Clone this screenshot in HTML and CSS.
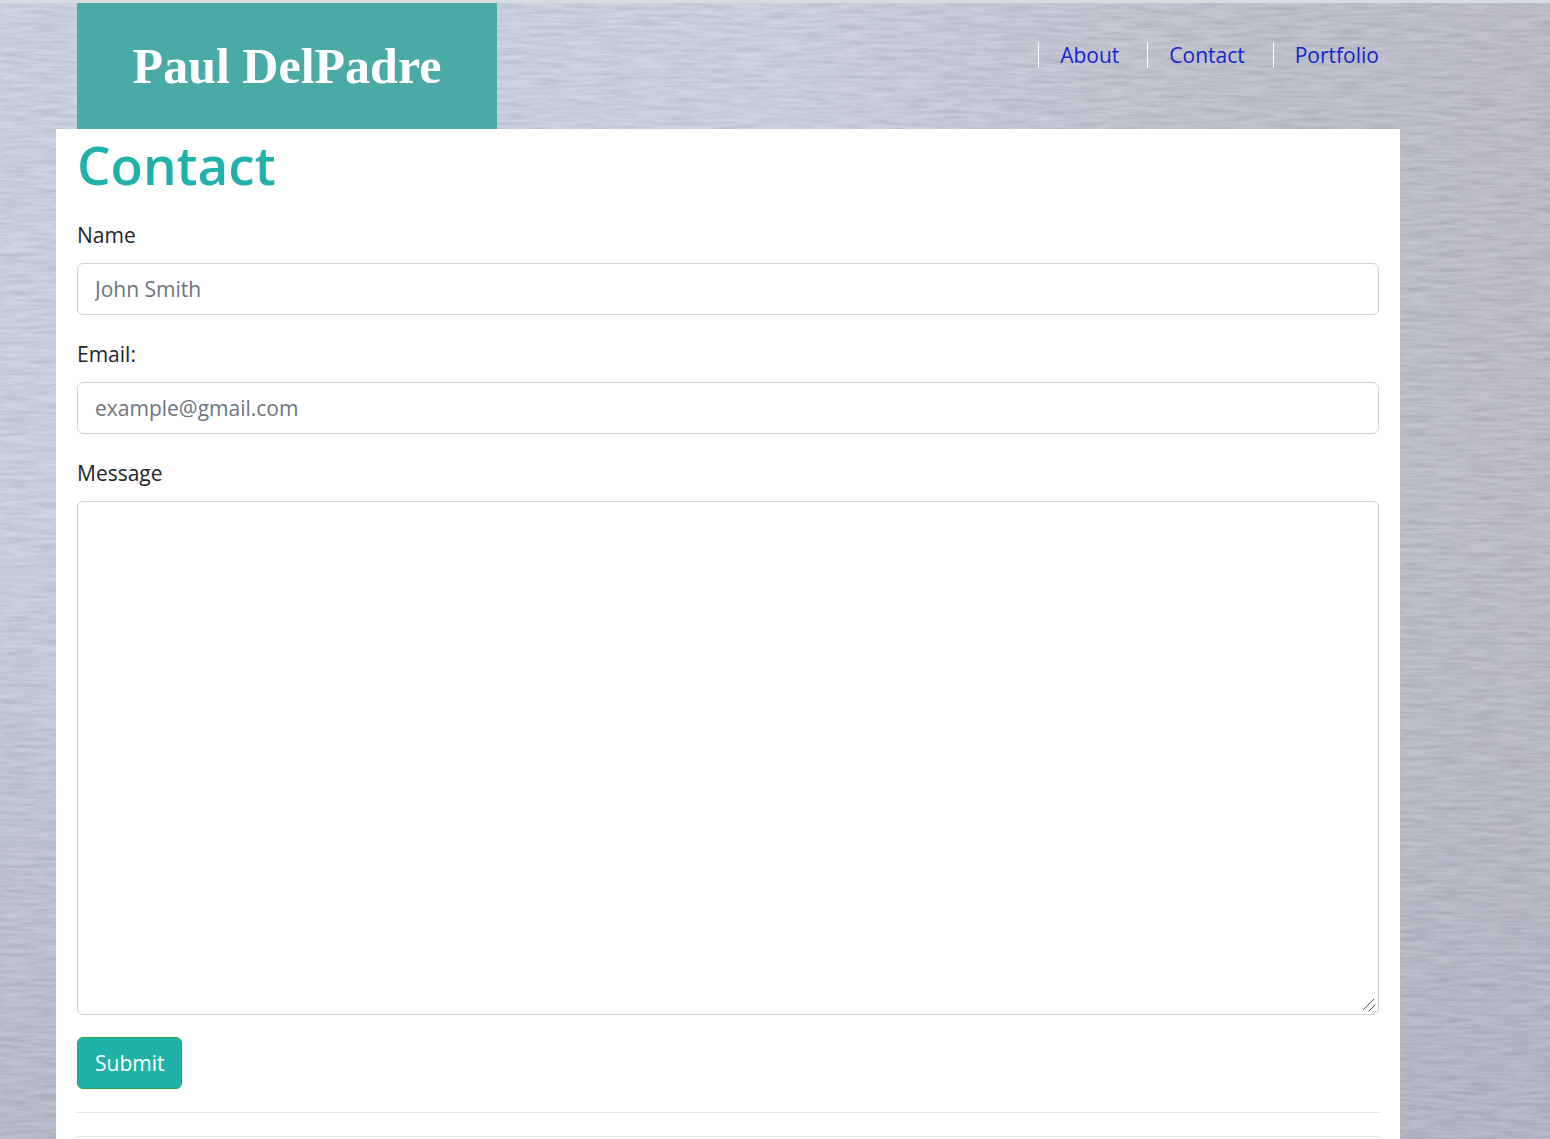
FILE: index.html
```html
<!DOCTYPE html>
<html lang="en">
<head>
  <meta charset="utf-8">
  <meta name="viewport" content="width=device-width, initial-scale=1">
  <title>Paul DelPadre - Contact</title>
  <link rel="stylesheet" href="styles.css">
</head>
<body>
  <svg class="texture" aria-hidden="true">
    <filter id="brushed" x="0" y="0" width="100%" height="100%" color-interpolation-filters="sRGB">
      <feTurbulence type="fractalNoise" baseFrequency="0.03 0.26" numOctaves="3" seed="7"/>
      <feColorMatrix values="1.6 0 0 0 -0.1  1.6 0 0 0 -0.1  1.6 0 0 0 -0.08  0 0 0 0 1"/>
    </filter>
    <rect width="100%" height="100%" filter="url(#brushed)"/>
  </svg>
  <div class="container">
    <header class="header">
      <a class="brand" href="#">Paul DelPadre</a>
      <nav class="nav">
        <a href="#">About</a>
        <a href="#">Contact</a>
        <a href="#">Portfolio</a>
      </nav>
    </header>
    <main class="content">
      <h1>Contact</h1>
      <form>
        <div class="group">
          <label for="name">Name</label>
          <input class="control" id="name" type="text" placeholder="John Smith">
        </div>
        <div class="group">
          <label for="email">Email:</label>
          <input class="control" id="email" type="email" placeholder="example@gmail.com">
        </div>
        <div class="group">
          <label for="message">Message</label>
          <textarea class="control message" id="message"></textarea>
        </div>
        <button class="submit" type="submit">Submit</button>
      </form>
      <hr>
      <hr>
    </main>
  </div>
</body>
</html>
```
FILE: styles.css
```css
* {
  box-sizing: border-box;
}

body {
  margin: 0;
  min-height: 100vh;
  border-top: 3px solid #d8dcde;
  background:
    linear-gradient(to bottom, rgba(176, 178, 194, 0) 45%, rgba(176, 178, 194, 0.8) 100%),
    linear-gradient(to right, #c8d0e1 0%, #cad0e0 50%, #bec0ca 80%, #babbc5 100%);
  color: #212529;
  font-family: "Segoe UI", "Open Sans", "Noto Sans", sans-serif;
  font-size: 21px;
  line-height: 34px;
}

.texture {
  position: absolute;
  top: 3px;
  left: 0;
  z-index: -1;
  width: 100%;
  height: calc(100% - 3px);
  opacity: 0.09;
}

.container {
  display: flex;
  flex-direction: column;
  max-width: 1344px;
  min-height: calc(100vh - 3px);
  margin-left: 56px;
}

.header {
  display: flex;
  justify-content: space-between;
  align-items: flex-start;
  padding: 0 21px;
}

.brand {
  width: 420px;
  padding: 32px 0;
  background: #4aaaa5;
  color: #fff;
  font-family: Georgia, "Liberation Serif", serif;
  font-size: 50px;
  font-weight: 700;
  line-height: 62px;
  text-align: center;
  text-decoration: none;
}

.nav {
  display: flex;
  gap: 28px;
  padding-top: 39px;
}

.nav a {
  padding-left: 21px;
  border-left: 1px solid #fff;
  color: #1226cc;
  line-height: 26px;
  text-decoration: none;
}

.content {
  flex: 1;
  padding: 0 21px;
  background: #fff;
}

h1 {
  margin: 0;
  padding: 2px 0 20px;
  color: #20b2aa;
  font-size: 53px;
  font-weight: 600;
  line-height: 67px;
}

.group {
  margin-bottom: 22px;
}

label {
  display: block;
  margin-bottom: 11px;
}

.control {
  display: block;
  width: 100%;
  height: 52px;
  padding: 8px 17px;
  border: 1px solid #ced4da;
  border-radius: 6px;
  background: #fff;
  color: #495057;
  font: inherit;
}

.control::placeholder {
  color: #6c757d;
}

.message {
  height: 514px;
  resize: vertical;
}

.message::-webkit-scrollbar {
  width: 20px;
}

.message::-webkit-resizer {
  background: url("data:image/svg+xml,%3Csvg xmlns='http://www.w3.org/2000/svg' width='20' height='20'%3E%3Cpath d='M3.5 17.5 17.5 3.5M10.5 17.5l7-7' stroke='%23555' fill='none'/%3E%3C/svg%3E") no-repeat right bottom;
}

.submit {
  display: block;
  padding: 8px 17px;
  border: 1px solid #28a745;
  border-radius: 6px;
  background: #20b2aa;
  color: #fff;
  font: inherit;
}

hr {
  margin: 23px 0;
  border: 0;
  border-top: 1px solid #e2e3e4;
}
```
